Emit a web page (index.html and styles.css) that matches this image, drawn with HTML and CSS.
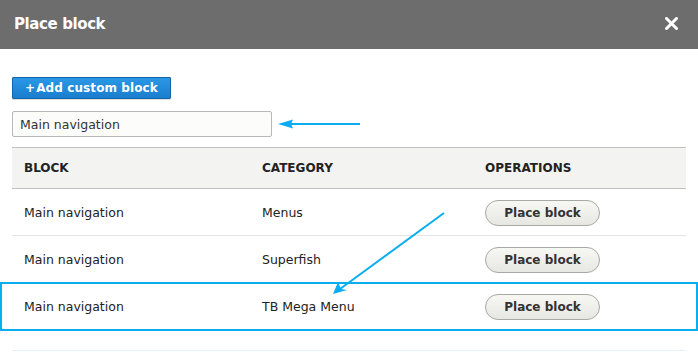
FILE: index.html
```html
<!DOCTYPE html>
<html lang="en">
<head>
  <meta charset="UTF-8" />
  <title>Place block</title>
  <link rel="stylesheet" href="styles.css">
</head>
<body>
  <div class="dialog">
    <div class="dialog-header">
      <h1 class="dialog-title">Place block</h1>
      <button class="dialog-close" title="Close">
        <svg width="13" height="13" viewBox="0 0 13 13">
          <path d="M1.5 1.5 L11.5 11.5 M11.5 1.5 L1.5 11.5" stroke="#fff" stroke-width="3" stroke-linecap="square" fill="none"/>
        </svg>
      </button>
    </div>

    <div class="dialog-body">
      <button class="btn-primary"><span class="plus">+</span>Add custom block</button>
      <input class="filter" type="text" value="Main navigation">

      <table class="blocks">
        <thead>
          <tr>
            <th class="col-block">Block</th>
            <th class="col-category">Category</th>
            <th class="col-ops">Operations</th>
          </tr>
        </thead>
        <tbody>
          <tr>
            <td>Main navigation</td>
            <td>Menus</td>
            <td><button class="btn-place">Place block</button></td>
          </tr>
          <tr>
            <td>Main navigation</td>
            <td>Superfish</td>
            <td><button class="btn-place">Place block</button></td>
          </tr>
          <tr>
            <td>Main navigation</td>
            <td>TB Mega Menu</td>
            <td><button class="btn-place">Place block</button></td>
          </tr>
        </tbody>
      </table>
      <div class="more-line"></div>
    </div>
  </div>

  <!-- annotations drawn over the screenshot -->
  <div class="highlight"></div>
  <svg class="arrows" width="698" height="353" viewBox="0 0 698 353">
    <line x1="360" y1="124" x2="286" y2="124" stroke="#0aaef0" stroke-width="2"/>
    <polygon points="278,124 293,119.5 291,124 293,128.5" fill="#0aaef0"/>
    <line x1="444" y1="213" x2="340" y2="289" stroke="#0aaef0" stroke-width="2"/>
    <polygon points="333,294 338,282 341,289 347,290" fill="#0aaef0"/>
  </svg>
</body>
</html>
```

FILE: styles.css
```css
body {
  margin: 0;
  font-family: "DejaVu Sans", Verdana, sans-serif;
  color: #222;
  background: #fff;
  overflow: hidden;
}

.dialog {
  width: 698px;
}

.dialog-header {
  height: 49px;
  background: #6d6d6d;
  display: flex;
  align-items: center;
  justify-content: space-between;
  padding: 0 20px 0 14px;
  box-sizing: border-box;
}
.dialog-title {
  margin: 0;
  color: #fff;
  font-size: 15px;
  font-weight: bold;
  letter-spacing: -0.4px;
  padding-bottom: 2px;
}
.dialog-close {
  background: none;
  border: 0;
  padding: 0;
  width: 13px;
  height: 13px;
  display: flex;
  cursor: pointer;
  margin-bottom: 2px;
}

.dialog-body {
  padding: 28px 12px 0 12px;
  display: flex;
  flex-direction: column;
  align-items: flex-start;
}

.btn-primary {
  height: 22px;
  width: 159px;
  padding: 0 0 0 12px;
  text-align: left;
  font-family: "DejaVu Sans", Verdana, sans-serif;
  font-size: 12px;
  font-weight: bold;
  letter-spacing: 0.1px;
  color: #fff;
  background: linear-gradient(#2a98e6, #1a7dcd);
  border: 1px solid #1664a8;
  border-radius: 1px;
  box-shadow: 0 1px 1px rgba(0, 0, 0, 0.15);
}
.plus {
  margin-right: 1px;
}

.filter {
  margin-top: 12px;
  width: 260px;
  height: 26px;
  box-sizing: border-box;
  border: 1px solid #b8b8b4;
  border-radius: 2px;
  background: #fcfcfa;
  padding: 0 7px;
  font-family: "DejaVu Sans", Verdana, sans-serif;
  font-size: 12.5px;
  color: #333;
}

.blocks {
  margin-top: 10px;
  width: 674px;
  table-layout: fixed;
  border-collapse: collapse;
  font-size: 12.5px;
}
.blocks th {
  height: 40px;
  padding: 0 12px;
  text-align: left;
  background: #f3f3f1;
  border-top: 1px solid #c0c0bd;
  border-bottom: 1px solid #c0c0bd;
  font-size: 12px;
  font-weight: bold;
  text-transform: uppercase;
  color: #222;
}
.col-block { width: 214px; }
.col-category { width: 199px; }

.blocks td {
  height: 46px;
  padding: 0 12px;
  border-bottom: 1px solid #e4e4e2;
  color: #222;
}

.btn-place {
  width: 115px;
  height: 26px;
  border: 1px solid #a8a8a4;
  border-radius: 13px;
  background: linear-gradient(#f7f7f4, #e7e7e2);
  font-family: "DejaVu Sans", Verdana, sans-serif;
  font-size: 12px;
  font-weight: bold;
  color: #333;
  padding: 0;
  margin-top: 1px;
}

.more-line {
  margin-top: 20px;
  width: 674px;
  border-top: 1px solid #e2f1fa;
}

.highlight {
  position: absolute;
  left: 0;
  top: 282px;
  width: 698px;
  height: 49px;
  box-sizing: border-box;
  border: 2px solid #0aaef0;
}
.arrows {
  position: absolute;
  left: 0;
  top: 0;
}
```
